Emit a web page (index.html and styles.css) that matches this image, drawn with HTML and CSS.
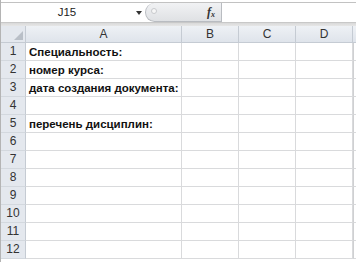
FILE: index.html
```html
<!DOCTYPE html>
<html lang="ru">
<head>
  <meta charset="UTF-8"/>
  <title>Лист Excel</title>
  <link rel="stylesheet" href="styles.css">
</head>
<body>
  <div class="sheet-window">

    <!-- Строка формул -->
    <div class="formula-bar">
      <div class="name-box">J15</div>
      <div class="name-arrow">
        <svg width="6" height="4" viewBox="0 0 6 4"><path d="M0 0h6L3 4z" fill="#333"/></svg>
      </div>
      <div class="fx-pill">
        <span class="pill-dot"></span>
        <span class="fx">f<sub>x</sub></span>
      </div>
      <div class="formula-input"></div>
    </div>

    <div class="bar-gap"></div>

    <!-- Сетка листа -->
    <div class="grid">
      <div class="corner">
        <svg width="9" height="9" viewBox="0 0 9 9"><path d="M9 0v9H0z" fill="#b9bfc7"/></svg>
      </div>
      <div class="col-head">A</div>
      <div class="col-head">B</div>
      <div class="col-head">C</div>
      <div class="col-head">D</div>
      <div class="col-head edge"></div>
    </div>
  </div>

  <script>
    // строки листа
    const cells = {
      1: 'Специальность:',
      2: 'номер курса:',
      3: 'дата создания документа:',
      5: 'перечень дисциплин:'
    };
    const grid = document.querySelector('.grid');
    for (let r = 1; r <= 12; r++) {
      const head = document.createElement('div');
      head.className = 'row-head';
      head.textContent = r;
      grid.appendChild(head);
      for (let c = 0; c < 5; c++) {
        const cell = document.createElement('div');
        cell.className = c === 4 ? 'cell edge' : 'cell';
        if (c === 0 && cells[r]) cell.textContent = cells[r];
        grid.appendChild(cell);
      }
    }
  </script>
</body>
</html>
```

FILE: styles.css
```css
/* === База === */
* { margin:0; padding:0; box-sizing:border-box; }
html, body { width:100%; height:100%; background:#fff; overflow:hidden; }
body { font-family:"Liberation Sans", Arial, sans-serif; color:#222; }

.sheet-window {
  display:flex;
  flex-direction:column;
  padding-top:2px;
  border-left:1px solid #b4b4b4;
  height:100%;
}

/* === Строка формул === */
.formula-bar {
  display:flex;
  align-items:stretch;
  height:20px;
  border-top:1px solid #c2c2c2;
  background:#fff;
}
.name-box {
  width:132px;
  font-size:11.5px;
  line-height:19px;
  text-align:center;
  color:#222;
}
.name-arrow {
  width:12px;
  display:flex;
  align-items:center;
  justify-content:center;
  padding-top:1px;
}
.fx-pill {
  width:77px;
  display:flex;
  align-items:center;
  justify-content:space-between;
  padding:0 6px 0 5px;
  background:linear-gradient(#f1f2f4, #dfe1e4);
  border:1px solid #b9bcc1;
  border-top:none;
  border-radius:11px 0 0 11px;
}
.pill-dot {
  width:6px; height:6px;
  border-radius:50%;
  background:#f7f7f7;
  border:1px solid #c8cacd;
  margin-top:-2px;
}
.fx {
  font-family:"Liberation Serif", serif;
  font-style:italic;
  font-weight:bold;
  font-size:12px;
  color:#333;
}
.fx sub { font-size:8px; vertical-align:-1px; }
.formula-input { flex:1; background:#fff; }

.bar-gap {
  height:4px;
  background:linear-gradient(#d9d9d9, #e6e6e6);
  border-top:1px solid #c8c8c8;
}

/* === Сетка === */
.grid {
  display:grid;
  grid-template-columns:25px 156px 57px 57px 57px 1fr;
  grid-template-rows:17px repeat(12, 18px);
}
.corner, .col-head, .row-head {
  background:#e4e8ee;
  color:#333;
  font-size:12px;
  border-right:1px solid #c5cbd3;
  border-bottom:1px solid #c5cbd3;
}
.corner {
  display:flex;
  align-items:flex-end;
  justify-content:flex-end;
  padding:0 2px 2px 0;
}
.col-head {
  display:flex;
  align-items:center;
  justify-content:center;
  background:linear-gradient(#eef1f5, #dfe4eb);
}
.col-head.edge { border-right:none; }
.row-head {
  display:flex;
  align-items:flex-end;
  justify-content:center;
  padding-bottom:2px;
  border-bottom-color:#d3d8de;
}
.cell {
  border-right:1px solid #d9dadc;
  border-bottom:1px solid #d9dadc;
  font-weight:bold;
  font-size:11.5px;
  padding:0 0 2px 3px;
  white-space:nowrap;
  display:flex;
  align-items:flex-end;
  color:#111;
}
.cell.edge { border-right:none; border-left:1px solid #cfd0d2; }
```
